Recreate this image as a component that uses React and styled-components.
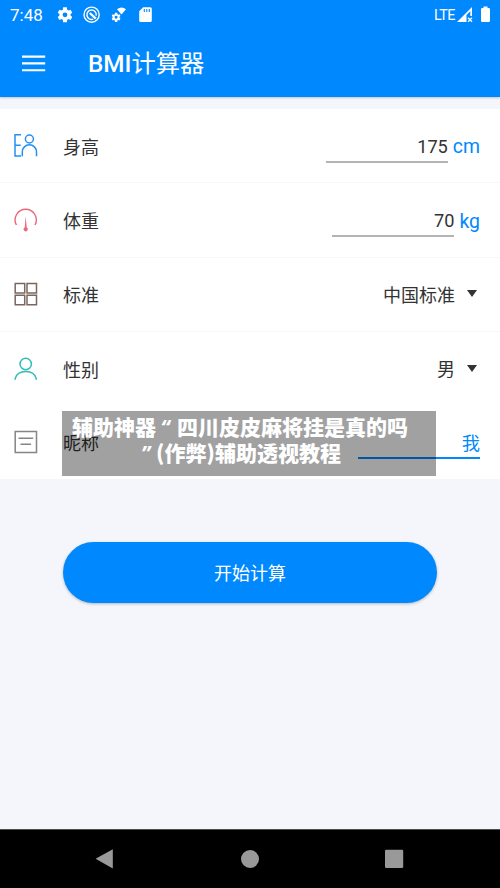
import styled, { createGlobalStyle } from 'styled-components';

const GlobalStyle = createGlobalStyle`
  * {
    box-sizing: border-box;
  }

  body {
    margin: 0;
    background: #f5f6fb;
    font-family: Roboto, "Noto Sans CJK SC", sans-serif;
  }
`;

// Full phone screen
const Screen = styled.div`
  display: flex;
  flex-direction: column;
  height: 888px;
  width: 500px;
  overflow: hidden;
`;

const Header = styled.header`
  height: 97px;
  flex: none;
  background: #0088ff;
  color: #fff;
  box-shadow: 0 1px 2px rgba(0, 0, 0, 0.2);
`;

const StatusBar = styled.div`
  display: flex;
  align-items: center;
  justify-content: space-between;
  height: 30px;
  padding: 0 9px 0 10px;

  svg {
    display: block;
  }
`;

const StatusGroup = styled.div`
  display: flex;
  align-items: center;
`;

const Clock = styled.span`
  width: 46px;
  font-size: 17px;
  line-height: 30px;
`;

const Network = styled.span`
  font-size: 14.3px;
  line-height: 28px;
  width: 23px;
  letter-spacing: -0.5px;
`;

const TitleBar = styled.div`
  display: flex;
  align-items: center;
  height: 67px;
  padding-left: 22px;
`;

const Title = styled.h1`
  margin: 0 0 0 42px;
  font-size: 24.3px;
  font-weight: 400;
  line-height: 67px;
`;

const TitleLatin = styled.span`
  font-weight: 500;
`;

const Form = styled.main`
  position: relative;
  flex: none;
  height: 370px;
  margin-top: 12px;
  background: #fff;
`;

const Row = styled.div`
  display: flex;
  align-items: center;
  height: ${(p) => (p.$last ? '71px' : '74.35px')};
  padding: 0 20px 0 13px;
  border-bottom: ${(p) => (p.$last ? 'none' : '1.5px solid')};
  border-color: ${(p) => (p.$plain ? 'transparent' : '#f7f7f7')};

  > svg {
    flex: none;
  }
`;

const Label = styled.span`
  flex: 1;
  margin-left: 25px;
  padding-top: 4px;
  color: #333;
  font-size: 18px;
  line-height: 26px;
`;

// Underlined text field
const Field = styled.div`
  width: 122px;
  padding-top: ${(p) => (p.$active ? '8px' : '6px')};
  height: ${(p) => (p.$active ? '35px' : '34px')};
  border-bottom: 2px solid ${(p) => (p.$active ? '#0088ff' : '#b4b4b4')};
  color: ${(p) => (p.$active ? '#0088ff' : '#333')};
  font-size: 18.2px;
  line-height: 23px;
  text-align: right;
`;

const Unit = styled.span`
  margin-left: 5px;
  padding-top: 3px;
  color: #0088ff;
  font-size: 19.4px;
  line-height: 26px;
`;

const Choice = styled.div`
  display: flex;
  align-items: center;
  padding-top: 3px;
  color: #333;
  font-size: 18px;
  line-height: 26px;
`;

const Arrow = styled.i`
  margin: 0 3px 4px 12px;
  border: solid transparent;
  border-width: 7px 5.5px 0;
  border-top-color: #333;
`;

// Translucent caption lying over the last row
const Caption = styled.div`
  position: absolute;
  top: 302px;
  left: 62px;
  width: 374px;
  height: 65px;
  padding-top: 2px;
  background: rgba(0, 0, 0, 0.37);
  color: #fff;
  font-family: "Noto Sans CJK SC", sans-serif;
  font-size: 21px;
  font-weight: 900;
  line-height: 26px;
  text-align: center;
  white-space: pre;
`;

const CaptionLine = styled.div`
  height: 26px;
  padding-right: ${(p) => p.$shift || 0}px;
`;

const Quote = styled.span`
  display: inline-block;
  width: ${(p) => p.$width}px;
  padding-right: ${(p) => p.$after || 0}px;
  font-family: "Noto Sans", sans-serif;
  font-style: italic;
  font-weight: 700;
  text-align: center;
`;

const SubmitButton = styled.button`
  flex: none;
  width: 374px;
  height: 61px;
  margin: 63px auto 0;
  padding: 0 0 2px;
  border: 0;
  border-radius: 31px;
  background: #0088ff;
  color: #fff;
  font-family: inherit;
  font-size: 18px;
  box-shadow: 0 1px 3px rgba(0, 0, 0, 0.26);
`;

const NavigationBar = styled.nav`
  display: flex;
  align-items: center;
  justify-content: space-between;
  height: 59px;
  flex: none;
  margin-top: auto;
  padding: 0 96px 0 95px;
  border-top: 1px solid #465048;
  background: #000;
`;

const GearIcon = ({ size = 18 }) => (
  <svg width={size} height={size} viewBox="0 0 24 24" fill="currentColor">
    <path d="M19.4 13a7.8 7.8 0 0 0 0-2l2.3-1.8-2.3-4-2.7 1.1a8 8 0 0 0-1.8-1L14.5 2h-5l-.4 3.3a8 8 0 0 0-1.8 1L4.6 5.2l-2.3 4L4.6 11a7.8 7.8 0 0 0 0 2l-2.3 1.8 2.3 4 2.7-1.1a8 8 0 0 0 1.8 1l.4 3.3h5l.4-3.3a8 8 0 0 0 1.8-1l2.7 1.1 2.3-4zM12 15.2a3.2 3.2 0 1 1 0-6.4 3.2 3.2 0 0 1 0 6.4z" />
  </svg>
);

const StatusIcons = () => (
  <svg width="98" height="20" viewBox="0 0 98 20" fill="none">
    <g transform="translate(0 .8)">
      <GearIcon size={18} />
    </g>
    <circle cx="35.6" cy="9.7" r="7.6" stroke="#fff" strokeWidth="1.4" />
    <path d="M37.3 14.1a4.7 4.7 0 1 1 2.9-3.5" stroke="#fff" strokeWidth="1.5" />
    <path d="M33.8 8L39.8 13.6" stroke="#fff" strokeWidth="2.3" />
    <g transform="translate(54.6 6.8)">
      <GearIcon size={11} />
    </g>
    <path d="M61 4.2Q65.5 .8 70 4.2L65.5 9.6z" fill="#fff" />
    <path d="M87.2 2.2h7.1q1.5 0 1.5 1.5v11.8q0 1.5-1.5 1.5H84.7q-1.5 0-1.5-1.5V6.2z" fill="#fff" />
    <path d="M88.3 4v3M90.8 4v3M93.3 4v3" stroke="#0088ff" strokeWidth="1.1" />
  </svg>
);

const SignalIcons = () => (
  <svg width="34" height="18" viewBox="0 0 34 18" fill="none">
    <path d="M0 16L15 1v9h-1.7V5.2L9.5 9v7z" fill="#fff" />
    <path d="M11 11.7l4 4M15 11.7l-4 4" stroke="#fff" strokeWidth="1.3" />
    <path d="M26.5 .5h4v1.6h1.3q1.2 0 1.2 1.2v11.5q0 1.2-1.2 1.2h-6.6q-1.2 0-1.2-1.2V3.3q0-1.2 1.2-1.2h1.3z" fill="#fff" />
  </svg>
);

const MenuIcon = () => (
  <svg width="24" height="20" viewBox="0 0 24 20">
    <path d="M0 2.6h23.2M0 9.4h23.2M0 16.2h23.2" stroke="#fff" strokeWidth="2.1" />
  </svg>
);

const HeightIcon = () => (
  <svg width="25" height="26" viewBox="0 0 25 26" fill="none" stroke="#2490f5" strokeWidth="1.5">
    <path d="M8 1.8H2v21.3h6M2 12.2h5.7" />
    <circle cx="16.4" cy="6" r="4" />
    <path d="M9.3 23.2v-4.3a7.1 7.1 0 0 1 14.2 0v4.3" />
  </svg>
);

const WeightIcon = () => (
  <svg width="25" height="26" viewBox="0 0 25 26" fill="none">
    <path d="M3.4 18A10.6 10.6 0 1 1 22 18" stroke="#e8687a" strokeWidth="1.4" />
    <path d="M12.7 9.3l1 11.3a2 2 0 1 1-2 0z" fill="#e8687a" />
  </svg>
);

const GridIcon = () => (
  <svg width="25" height="26" viewBox="0 0 25 26" fill="none" stroke="#79675f" strokeWidth="1.5">
    <path d="M2.2 2.6h9.5v9.5H2.2zM14 2.6h9.5v9.5H14zM2.2 14.3h9.5v9.5H2.2zM14 14.3h9.5v9.5H14z" />
  </svg>
);

const PersonIcon = () => (
  <svg width="25" height="26" viewBox="0 0 25 26" fill="none" stroke="#30bdb6" strokeWidth="1.5">
    <circle cx="12.7" cy="8" r="5.7" />
    <path d="M2.2 23.7v-1.2C3.5 17.7 7.5 15.5 12.7 15.5S21.9 17.7 23.2 22.5V23.7" />
  </svg>
);

const NoteIcon = () => (
  <svg width="25" height="26" viewBox="0 0 25 26" fill="none" stroke="#858585" strokeWidth="1.5">
    <path d="M2.2 2.4h21.3v21H2.2zM5.5 9.3h14.7M7.5 15.3h10.5" />
  </svg>
);

const App = () => {
  return (
    <Screen>
      <GlobalStyle />
      <Header>
        <StatusBar>
          <StatusGroup>
            <Clock>7:48</Clock>
            <StatusIcons />
          </StatusGroup>
          <StatusGroup>
            <Network>LTE</Network>
            <SignalIcons />
          </StatusGroup>
        </StatusBar>
        <TitleBar>
          <MenuIcon />
          <Title><TitleLatin>BMI</TitleLatin>计算器</Title>
        </TitleBar>
      </Header>

      <Form>
        <Row>
          <HeightIcon />
          <Label>身高</Label>
          <Field>175</Field>
          <Unit>cm</Unit>
        </Row>
        <Row>
          <WeightIcon />
          <Label>体重</Label>
          <Field>70</Field>
          <Unit>kg</Unit>
        </Row>
        <Row>
          <GridIcon />
          <Label>标准</Label>
          <Choice>中国标准<Arrow /></Choice>
        </Row>
        <Row $plain>
          <PersonIcon />
          <Label>性别</Label>
          <Choice>男<Arrow /></Choice>
        </Row>
        <Row $last>
          <NoteIcon />
          <Label>昵称</Label>
          <Field $active>我</Field>
        </Row>
        <Caption>
          <CaptionLine $shift={18}>辅助神器<Quote $width={21} $after={3}>“</Quote>四川皮皮麻将挂是真的吗</CaptionLine>
          <CaptionLine $shift={19}><Quote $width={18} $after={3}>”</Quote>(作弊)辅助透视教程</CaptionLine>
        </Caption>
      </Form>

      <SubmitButton>开始计算</SubmitButton>

      <NavigationBar>
        <svg width="19" height="22" viewBox="0 0 19 22">
          <path d="M17.8 1.2v19.3L.6 10.8z" fill="#999" />
        </svg>
        <svg width="20" height="20" viewBox="0 0 20 20">
          <circle cx="10" cy="10" r="9" fill="#999" />
        </svg>
        <svg width="19" height="20" viewBox="0 0 19 20">
          <rect x="0" y="0.8" width="18.2" height="18.2" rx="1.2" fill="#999" />
        </svg>
      </NavigationBar>
    </Screen>
  );
};

export default App;
